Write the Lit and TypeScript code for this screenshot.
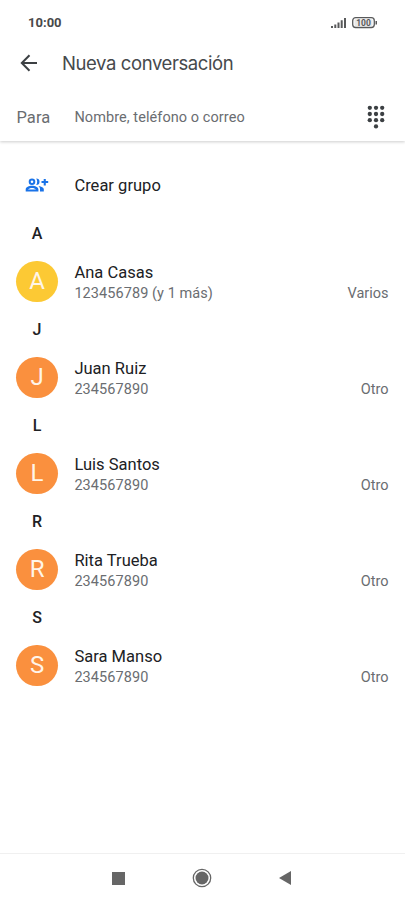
import { LitElement, html, svg, css } from "lit";
import { customElement } from "lit/decorators.js";
import { classMap } from "lit/directives/class-map.js";

interface Contact {
  name: string;
  phone: string;
  kind: string;
}

const contacts: Contact[] = [
  { name: "Ana Casas", phone: "123456789 (y 1 más)", kind: "Varios" },
  { name: "Juan Ruiz", phone: "234567890", kind: "Otro" },
  { name: "Luis Santos", phone: "234567890", kind: "Otro" },
  { name: "Rita Trueba", phone: "234567890", kind: "Otro" },
  { name: "Sara Manso", phone: "234567890", kind: "Otro" },
];

@customElement("app-root")
export class AppRoot extends LitElement {
  static styles = css`
    :host {
      display: flex;
      flex-direction: column;
      height: 902px;
      background: #fff;
      font-family: Roboto, "Liberation Sans", sans-serif;
      color: #202124;
      overflow: hidden;
    }
    * { box-sizing: border-box; }
    svg { display: block; flex: none; }
    .status {
      height: 44px;
      display: flex;
      align-items: center;
      padding: 1px 27px 0 28px;
      font-size: 13px;
      font-weight: 700;
      letter-spacing: 0.02px;
      color: #48494a;
    }
    .status svg { margin-left: auto; }
    .bar {
      height: 38px;
      display: flex;
      align-items: center;
      padding-left: 20px;
      color: #3c4043;
    }
    .title {
      margin: 0 0 0 24px;
      font: 400 18.5px/24px Inter, Roboto, sans-serif;
      letter-spacing: -0.4px;
      color: #46494c;
      white-space: nowrap;
    }
    .to {
      height: 59px;
      display: flex;
      align-items: center;
      padding: 11px 20px 0 16.4px;
      color: #6a6d71;
      box-shadow: 0 1px 3px rgba(0, 0, 0, 0.2);
      clip-path: inset(0 0 -6px 0);
      flex: none;
    }
    .label { width: 58px; font-size: 16.5px; letter-spacing: 0.1px; }
    .hint { font-size: 14.5px; letter-spacing: 0.07px; }
    .to svg { margin: -1px 0 0 auto; }
    .group {
      height: 73px;
      padding-top: 15px;
      display: flex;
      align-items: center;
    }
    .group svg { margin: 0 25.4px 0 25px; }
    .name { font-size: 16.5px; line-height: 21px; letter-spacing: 0.02px; }
    .letter {
      height: 39px;
      width: 74px;
      display: flex;
      align-items: center;
      justify-content: center;
      font-size: 16px;
      font-weight: 500;
    }
    .row {
      height: 57px;
      display: flex;
      align-items: center;
      padding: 0 16.5px 0 16.4px;
    }
    .avatar {
      width: 41.4px;
      height: 41.4px;
      margin: -0.5px 16.6px 0 0;
      border-radius: 50%;
      display: flex;
      align-items: center;
      justify-content: center;
      background: #fa903e;
      color: #fff5e9;
      font-size: 24px;
    }
    .yellow { background: #fcc934; }
    .info { flex: 1; padding-top: 2px; }
    .small { font-size: 14.5px; line-height: 21px; letter-spacing: 0.07px; color: #6a6d71; }
    .kind { letter-spacing: 0; }
    .line { display: flex; justify-content: space-between; }
    .nav {
      margin-top: auto;
      height: 49px;
      border-top: 1px solid #f0f0f0;
      display: flex;
      align-items: center;
      padding-left: 112px;
    }
    .home { margin: 0 66px 0 67px; }
  `;

  render() {
    return html`
      <div class="status">
        <span>10:00</span>
        <svg width="47" height="14" viewBox="0 0 47 14" fill="#58595a">
          <path d="M0 10h2v2H0zM3.3 8.5h2V12h-2zM6.5 6.5h2V12h-2zM9.7 4.2h2V12h-2zM13 2h2v10h-2z" />
          <rect x="21.7" y="1.7" width="21.6" height="9.8" rx="3" fill="none" stroke="#58595a" stroke-width="1.3" />
          <rect x="23.5" y="3.3" width="18" height="6.6" rx="1" fill="#e8e8e8" />
          <path d="M44.5 5H46v3.5h-1.5z" />
          <text x="32.5" y="9.7" text-anchor="middle" font-size="8.5" font-weight="700" letter-spacing="0">100</text>
        </svg>
      </div>
      <header class="bar">
        <svg width="18" height="18" viewBox="0 0 18 18" fill="none" stroke="currentColor" stroke-width="2">
          <path d="M17 9H2.2M9.5 1.2L1.8 9l7.7 7.8" />
        </svg>
        <h1 class="title">Nueva conversación</h1>
      </header>
      <div class="to">
        <span class="label">Para</span>
        <span class="hint">Nombre, teléfono o correo</span>
        <svg width="18" height="24" viewBox="0 0 18 24" fill="#3c4043">
          ${[2.8, 9, 15.2].map((x) => [2.8, 9, 15.2].map((y) => this.dot(x, y)))}
          ${this.dot(9, 21.4)}
        </svg>
      </div>
      <div class="group">
        <svg width="24" height="14" viewBox="0 0 24 14" fill="#1a73e8">
          <circle cx="7" cy="3.7" r="2.3" fill="none" stroke="#1a73e8" stroke-width="2" />
          <path d="M11.2.4a3.3 3.3 0 1 1 0 6.6c1.3-1.9 1.3-4.7 0-6.6z" />
          <path fill-rule="evenodd" d="M.7 13.5v-2.2c0-2.3 3.3-3.5 6.3-3.5s6.4 1.2 6.4 3.5v2.2zM3 11.5h8c-.6-.9-2.5-1.6-4-1.6s-3.4.7-4 1.6z" />
          <path d="M13.5 8c3 .4 5.3 1.6 5.3 3.3v2.2H15v-2.2c0-1.4-.5-2.4-1.5-3.3z" />
          <path d="M18.7.9h2.1v2.1h2.4v2h-2.4v2.4h-2.1V5h-2.2V3h2.2z" />
        </svg>
        <span class="name">Crear grupo</span>
      </div>
      ${contacts.map((c, i) => this.section(c, i === 0))}
      <nav class="nav">
        <svg width="13" height="13"><rect width="13" height="13" fill="#666" /></svg>
        <svg class="home" width="20" height="20" viewBox="0 0 20 20">
          <circle cx="10" cy="10" r="8.7" fill="none" stroke="#666" stroke-width="1.3" />
          <circle cx="10" cy="10" r="6.5" fill="#666" />
        </svg>
        <svg width="14" height="14" viewBox="0 0 14 14"><path d="M13 0v14L1 7z" fill="#666" /></svg>
      </nav>
    `;
  }

  private dot(x: number, y: number) {
    return svg`<circle cx=${x} cy=${y} r="2.15" />`;
  }

  private section(c: Contact, yellow: boolean) {
    return html`
      <section>
        <div class="letter">${c.name[0]}</div>
        <div class="row">
          <div class=${classMap({ avatar: true, yellow })}>${c.name[0]}</div>
          <div class="info">
            <div class="name">${c.name}</div>
            <div class="small line"><span>${c.phone}</span><span class="kind">${c.kind}</span></div>
          </div>
        </div>
      </section>
    `;
  }
}
